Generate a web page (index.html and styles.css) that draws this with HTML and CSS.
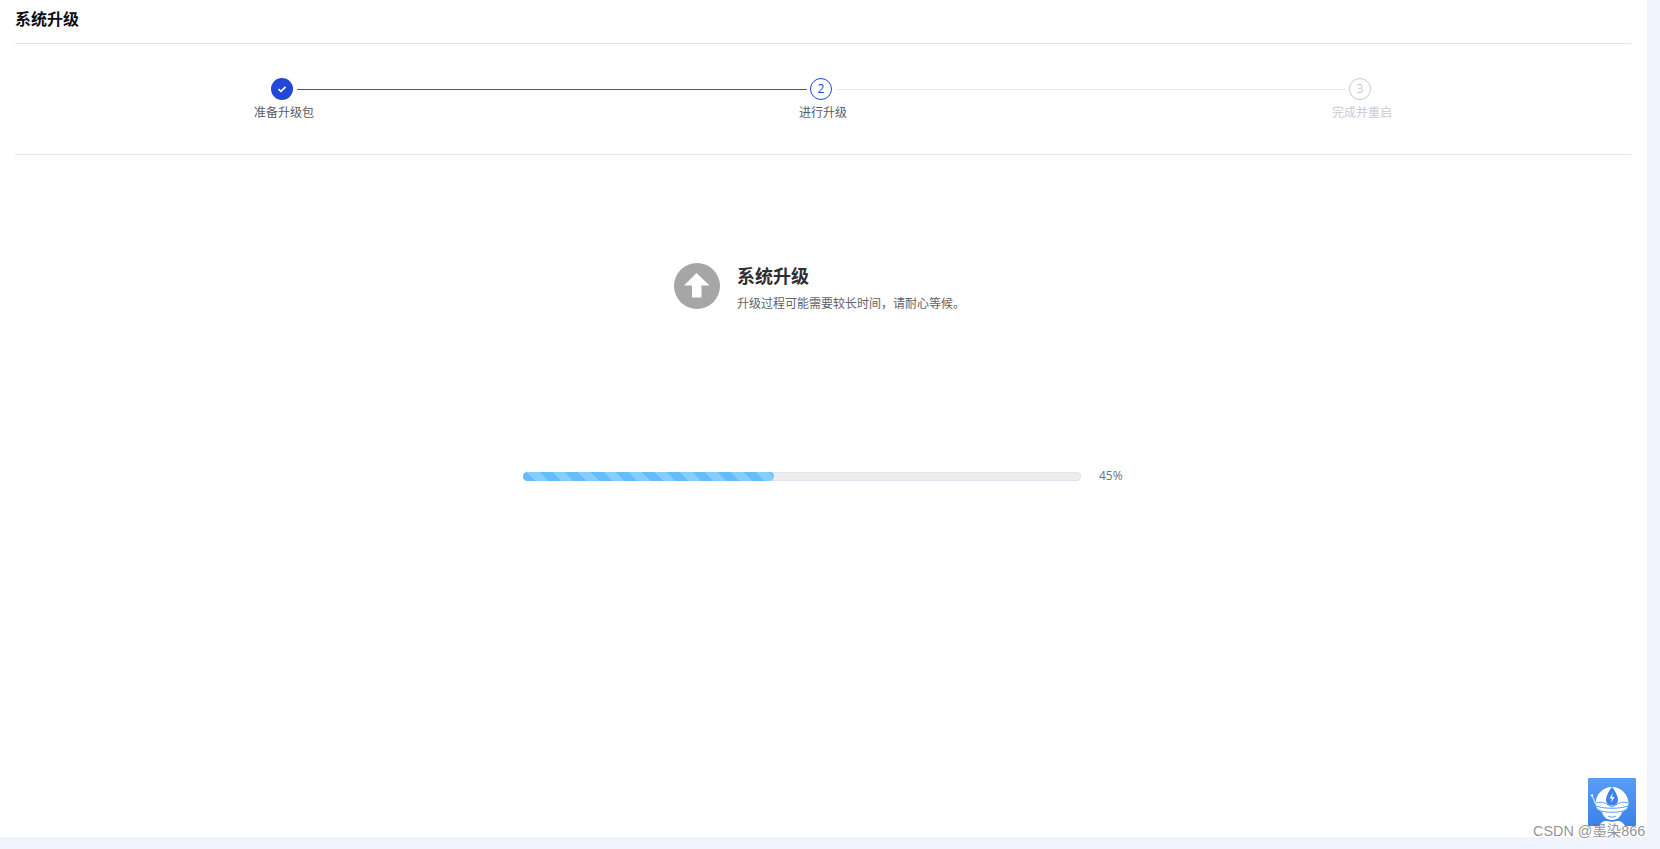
FILE: index.html
```html
<!DOCTYPE html>
<html lang="zh">
<head>
<meta charset="utf-8">
<title>系统升级</title>
<link rel="stylesheet" href="styles.css">
</head>
<body>
<main class="page">
  <h1 class="title">系统升级</h1>
  <section class="steps">
    <div class="step done">
      <div class="step-head">
        <span class="dot"><svg class="check" viewBox="0 0 10 10" width="10" height="10"><path d="M1.5 5.2 4 7.4 8.5 2.8" fill="none" stroke="#fff" stroke-width="1.7"/></svg></span>
        <span class="bar"></span>
      </div>
      <div class="label">准备升级包</div>
    </div>
    <div class="step active">
      <div class="step-head">
        <span class="dot">2</span>
        <span class="bar"></span>
      </div>
      <div class="label label-four">进行升级</div>
    </div>
    <div class="step todo">
      <div class="step-head">
        <span class="dot">3</span>
      </div>
      <div class="label">完成并重启</div>
    </div>
  </section>
  <section class="info">
    <svg class="info-icon" viewBox="0 0 46 46" width="46" height="46">
      <circle cx="23" cy="23" r="23" fill="#a6a6a6"/>
      <path d="M22.500 10 35.500 22.500H27.500V34.500H18V22.500H10Z" fill="#fff"/>
    </svg>
    <div class="info-text">
      <h2 class="info-title">系统升级</h2>
      <p class="info-desc">升级过程可能需要较长时间，请耐心等候。</p>
    </div>
  </section>
  <section class="progress">
    <div class="track"><div class="fill" style="width:45%"></div></div>
    <span class="percent">45%</span>
  </section>
</main>
<div class="avatar">
  <svg viewBox="0 0 48 48" width="48" height="48">
    <defs><linearGradient id="g" x1="0" y1="0" x2="0" y2="1"><stop offset="0" stop-color="#5b9df5"/><stop offset="1" stop-color="#3a82ea"/></linearGradient></defs>
    <rect width="48" height="48" rx="1" fill="url(#g)"/>
    <path d="M24 9C15 9 8 16 7.500 25 7.500 30 11 33 14 34 15 39 19 42 24 42 29 42 33 39 34 34 37 33 40.500 30 40.500 25 40 16 33 9 24 9Z" fill="#fff"/>
    <path d="M24 9C20.500 13 18 19 18 22 18 25.500 20.500 27.500 24 27.500 27.500 27.500 30 25.500 30 22 30 19 27.500 13 24 9Z" fill="#3a82ea"/>
    <path d="M25 14.500 21.500 20.500H24L23 25 26.500 19H24Z" fill="#fff"/>
    <path d="M8 25C16 22.500 19 27 24 29 29 27 32 22.500 40 25M8 28C16 31 32 31 40 28M10 32C17 35 31 35 38 32" fill="none" stroke="#5d9cf0" stroke-width="1"/>
    <path d="M20 38C22.500 39.500 25.500 39.500 28 38" fill="none" stroke="#5d9cf0" stroke-width="1"/>
    <path d="M11 48C13 43.500 17 42.500 19 43 22 44 26 44 29 43 31 42.500 35 43.500 37 48Z" fill="#fff"/>
    <circle cx="4" cy="17.500" r="1.200" fill="#fff"/>
    <path d="M4.500 18.500 7.500 26" stroke="#fff" stroke-width=".9"/>
  </svg>
</div>
<div class="watermark">CSDN @墨染866</div>
</body>
</html>
```
FILE: styles.css
```css
* { box-sizing: border-box; }
html, body { margin: 0; height: 100%; overflow: hidden; }
body {
  background: #f0f3fb;
  font-family: "Open Sans", "Noto Sans CJK SC", sans-serif;
  position: relative;
}
.page {
  width: 1647px;
  height: 837px;
  background: #fff;
  padding: 0 16px 0 15px;
}
.title {
  margin: 0;
  height: 44px;
  padding-top: 7px;
  border-bottom: 1px solid #e3e5ec;
  font-size: 16px;
  line-height: 24px;
  font-weight: 700;
  color: #0c0e12;
}
.steps {
  display: flex;
  height: 111px;
  padding: 34px 0 0 256px;
  border-bottom: 1px solid #e4e6ec;
}
.step { width: 539px; flex: none; }
.step:last-child { width: 22px; }
.step-head { display: flex; align-items: center; gap: 4px; height: 22px; }
.dot {
  flex: none;
  width: 22px;
  height: 22px;
  border-radius: 50%;
  display: flex;
  align-items: center;
  justify-content: center;
  font-size: 12px;
  line-height: 1;
}
.bar { flex: none; width: 510px; height: 1px; }
.label {
  margin: 4px 0 0 -17px;
  width: 60px;
  font-size: 12px;
  line-height: 18px;
  white-space: nowrap;
  color: #575b66;
}
.label-four { margin-left: -11px; }
.done .dot { background: #2148d8; }
.done .bar { background: #2a58dd; }
.active .dot { border: 1px solid #2148d8; color: #2148d8; }
.active .bar { background: #e8eaee; }
.todo .dot { border: 1px solid #c5ccd8; color: #c5ccd8; }
.todo .label { color: #c5ccd8; }
.info {
  display: flex;
  align-items: flex-start;
  gap: 17px;
  margin: 108px 0 0 659px;
}
.info-icon { flex: none; }
.info-text { padding-top: 1px; }
.info-title {
  margin: 0;
  font-size: 18px;
  line-height: 24px;
  font-weight: 700;
  color: #2e2e33;
}
.info-desc {
  margin: 7px 0 0;
  font-size: 12px;
  line-height: 18px;
  color: #5f6268;
}
.progress {
  display: flex;
  align-items: center;
  gap: 18px;
  margin: 154px 0 0 508px;
}
.track {
  width: 558px;
  height: 9px;
  border-radius: 5px;
  background: #eeeeee;
  box-shadow: inset 0 0 0 1px #e2e3ee;
}
.fill {
  height: 9px;
  border-radius: 5px;
  background-color: #62bdfa;
  background-image: repeating-linear-gradient(45deg, #62bdfa 0 9px, #85cdfb 9px 18px);
}
.percent {
  font-size: 12px;
  line-height: 18px;
  color: #667085;
}
.avatar {
  position: absolute;
  left: 1588px;
  top: 778px;
  width: 48px;
  height: 48px;
}
.avatar svg { display: block; }
.watermark {
  position: absolute;
  left: 1533px;
  top: 822px;
  font-family: "Liberation Sans", "Noto Sans CJK SC", sans-serif;
  font-size: 14.400px;
  line-height: 18px;
  white-space: nowrap;
  color: rgba(110, 110, 110, .75);
}
```
